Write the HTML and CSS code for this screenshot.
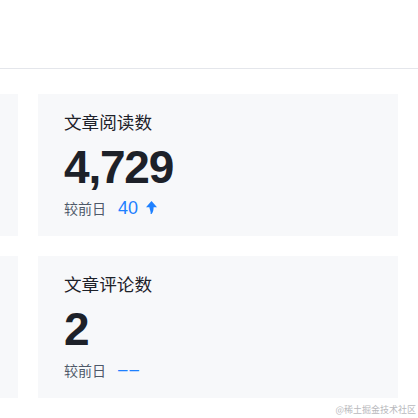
FILE: index.html
```html
<!DOCTYPE html>
<html lang="zh-CN">
<head>
<meta charset="utf-8">
<link rel="stylesheet" href="styles.css">
</head>
<body>
<div class="header"></div>
<div class="grid">
  <div class="card"></div>
  <div class="card">
    <div class="title">文章阅读数</div>
    <div class="num">4,729</div>
    <div class="foot"><span class="label">较前日</span><span class="delta">40</span><svg class="arrow" width="11" height="13" viewBox="0 0 11 13"><path d="M5.5 0 L11 6.2 L7.6 6.2 C7.6 8.6 7.2 10.8 5.6 13 L4.6 13 C5.2 11 3.6 8.4 3.4 6.2 L0 6.2 Z" fill="#1e80ff"/></svg></div>
  </div>
  <div class="card"></div>
  <div class="card">
    <div class="title">文章评论数</div>
    <div class="num">2</div>
    <div class="foot"><span class="label">较前日</span><span class="delta dash">––</span></div>
  </div>
</div>
<div class="mark">@稀土掘金技术社区</div>
</body>
</html>
```
FILE: styles.css
```css
html, body {
  margin: 0;
  padding: 0;
  background: #ffffff;
  overflow: hidden;
  width: 418px;
  height: 418px;
  font-family: "Noto Sans CJK SC", "Liberation Sans", sans-serif;
}
.header {
  height: 69px;
  border-bottom: 1px solid #e4e6eb;
  box-sizing: border-box;
}
.grid {
  display: grid;
  grid-template-columns: 360px 360px;
  grid-auto-rows: 142px;
  gap: 20px;
  margin-left: -342px;
  padding-top: 25px;
}
.card {
  background: #f7f8fa;
  padding: 16px 26px 0;
  box-sizing: border-box;
}
.title {
  font-size: 17.6px;
  line-height: 24px;
  color: #1d2129;
}
.num {
  font-family: "Liberation Sans", "Noto Sans", sans-serif;
  font-weight: 700;
  font-size: 46px;
  line-height: 52px;
  letter-spacing: -1.2px;
  color: #1d2129;
  margin-top: 7px;
}
.foot {
  display: flex;
  align-items: center;
  height: 24px;
  margin-top: 3px;
}
.label {
  font-size: 14px;
  color: #4e5969;
  line-height: 24px;
}
.delta {
  font-family: "Liberation Sans", sans-serif;
  font-size: 18px;
  color: #1e80ff;
  margin-left: 12px;
  line-height: 24px;
}
.dash {
  letter-spacing: 2px;
  font-size: 17px;
}
.arrow {
  margin-left: 8px;
  margin-top: -2px;
}
.mark {
  position: absolute;
  right: 2px;
  top: 404px;
  font-size: 9px;
  color: #b8b9bd;
  line-height: 12px;
}
```
